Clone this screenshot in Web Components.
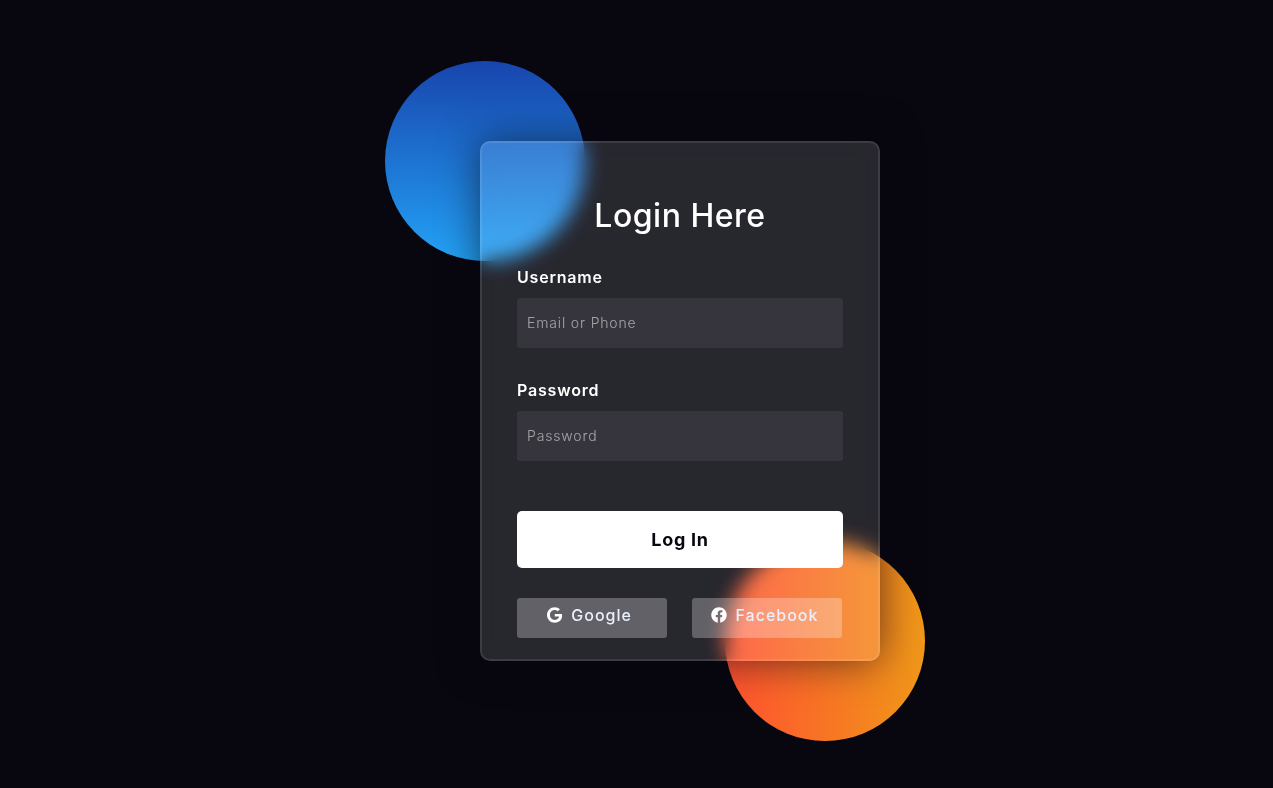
<!DOCTYPE html>
<html lang="en">
<head>
<meta charset="utf-8">
<title>Login Here</title>
<style>
  html, body { margin: 0; height: 100%; background: #080710; }
  body { font-family: Inter, "Noto Sans", "Liberation Sans", sans-serif; }
</style>
</head>
<body>
<login-stage>
  <glow-orb slot="orbs" kind="blue"></glow-orb>
  <glow-orb slot="orbs" kind="orange"></glow-orb>
  <login-card heading="Login Here">
    <form-field label="Username" placeholder="Email or Phone" type="text"></form-field>
    <form-field label="Password" placeholder="Password" type="password"></form-field>
    <login-button>Log In</login-button>
    <social-row>
      <social-button icon="google">Google</social-button>
      <social-button icon="facebook">Facebook</social-button>
    </social-row>
  </login-card>
</login-stage>
<script>
  const define = (name, css, html) => {
    customElements.define(name, class extends HTMLElement {
      connectedCallback() {
        if (this.shadowRoot) return;
        const root = this.attachShadow({ mode: 'open' });
        const attrs = n => (this.getAttribute(n) || '');
        root.innerHTML = `<style>${css}</style>` + (typeof html === 'function' ? html(attrs) : html);
      }
    });
  };

  define('login-stage', `
    :host { display: flex; justify-content: center; align-items: center; box-sizing: border-box;
            height: 788px; padding: 14px 0 0 87px; overflow: hidden; }
    .frame { position: relative; width: 400px; height: 520px; }
  `, `<div class="frame"><slot name="orbs"></slot><slot></slot></div>`);

  define('glow-orb', `
    :host { display: block; position: absolute; width: 200px; height: 200px; border-radius: 50%; }
    :host([kind="blue"]) { background: linear-gradient(#1845ad, #23a2f6); left: -95px; top: -80px; }
    :host([kind="orange"]) { background: linear-gradient(to right, #ff512f, #f09819); right: -45px; bottom: -80px; }
  `, ``);

  define('login-card', `
    :host { display: block; position: relative; box-sizing: border-box; width: 400px; height: 520px;
            padding: 50px 35px; background: rgba(255,255,255,.13); border: 2px solid rgba(255,255,255,.1);
            border-radius: 10px; backdrop-filter: blur(10px); -webkit-backdrop-filter: blur(10px);
            box-shadow: 0 0 40px rgba(8,7,16,.6); color: #fff; }
    h3 { margin: 0 0 -4px; font-size: 32px; font-weight: 500; line-height: 46px; text-align: center; letter-spacing: .5px; }
  `, a => `<h3>${a('heading')}</h3><slot></slot>`);

  define('form-field', `
    :host { display: block; margin-top: 30px; }
    label { display: block; font-size: 16px; font-weight: 600; line-height: 25px; letter-spacing: .8px; color: #fff; }
    input { display: block; box-sizing: border-box; width: 100%; height: 50px; margin-top: 8px; padding: 0 10px 2px;
            border: 0; outline: 0; border-radius: 3px; background: rgba(255,255,255,.07); color: #fff;
            font: 300 14px Inter, "Noto Sans", sans-serif; letter-spacing: .85px; }
    input::placeholder { color: #e5e5e5; opacity: .62; }
  `, a => `<label>${a('label')}</label><input type="${a('type')}" placeholder="${a('placeholder')}">`);

  define('login-button', `
    :host { display: block; margin-top: 50px; padding: 15px 0; background: #fff; color: #080710;
            font-size: 18px; font-weight: 650; line-height: 27px; letter-spacing: .7px; text-align: center; border-radius: 5px; }
  `, `<slot></slot>`);

  define('social-row', `
    :host { display: flex; gap: 25px; margin-top: 30px; }
  `, `<slot></slot>`);

  const ICONS = {
    google: ['0 0 488 512', 15.25, 'M488 261.8C488 403.3 391.1 504 248 504 110.8 504 0 393.2 0 256S110.8 8 248 8c66.8 0 123 24.5 166.3 64.9l-67.5 64.9C258.5 52.6 94.3 116.6 94.3 256c0 86.5 69.1 156.6 153.7 156.6 98.2 0 135-70.4 140.8-106.9H248v-85.3h236.1c2.3 12.7 3.9 24.9 3.9 41.4z'],
    facebook: ['0 0 512 512', 16, 'M504 256C504 119 393 8 256 8S8 119 8 256c0 123.78 90.69 226.38 209.25 245V327.69h-63V256h63v-54.64c0-62.15 37-96.48 93.67-96.48 27.14 0 55.52 4.84 55.52 4.84v61h-31.28c-30.8 0-40.41 19.12-40.41 38.73V256h68.78l-11 71.69h-57.78V501C413.31 482.38 504 379.78 504 256z']
  };

  define('social-button', `
    :host { display: flex; justify-content: center; align-items: center; box-sizing: border-box; width: 150px; height: 40px;
            padding: 4px 10px 11px 5px; gap: 9px; background: rgba(255,255,255,.27); color: #eaf0fb;
            border-radius: 3px; font-size: 16px; font-weight: 500; line-height: 24px; letter-spacing: 1px; }
    svg { height: 16px; fill: #fff; flex: none; }
  `, a => {
    const [vb, w, d] = ICONS[a('icon')];
    return `<svg viewBox="${vb}" width="${w}" aria-hidden="true"><path d="${d}"/></svg><slot></slot>`;
  });
</script>
</body>
</html>
